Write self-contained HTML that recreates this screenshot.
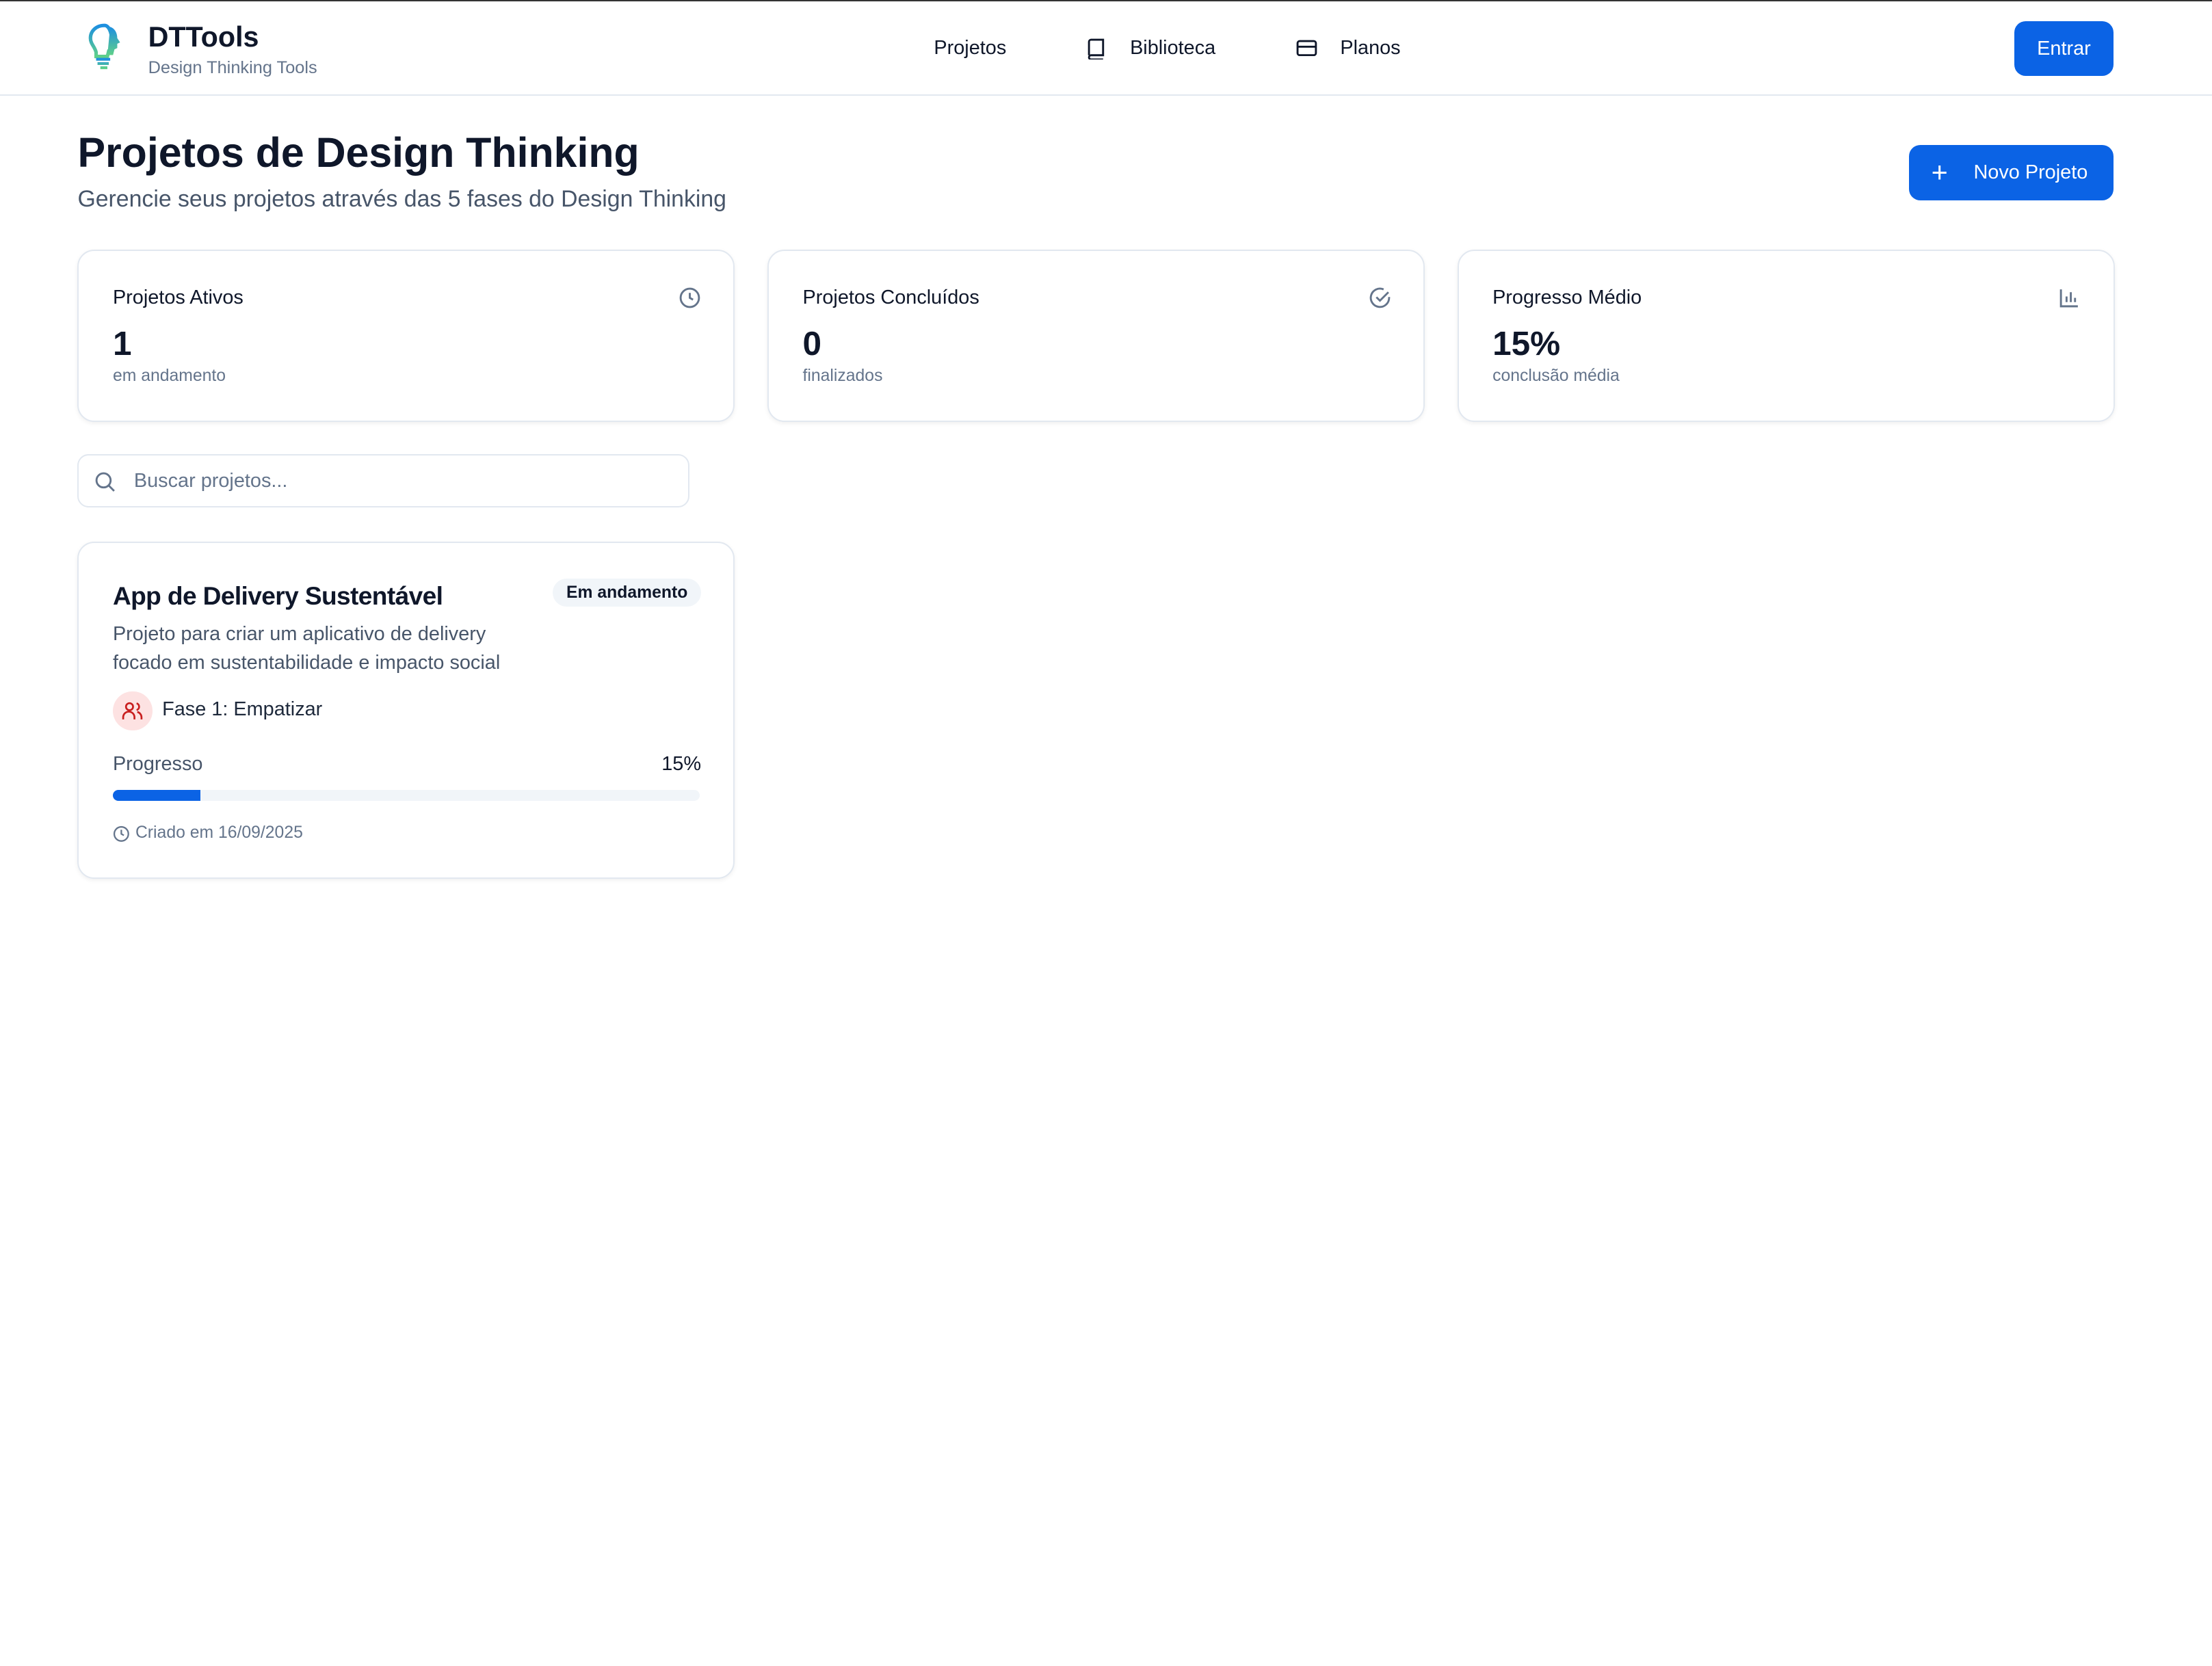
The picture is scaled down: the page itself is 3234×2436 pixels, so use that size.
<!DOCTYPE html>
<html><head><meta charset="utf-8"><style>
html{zoom:2.0625}
body{margin:0;width:1568px;height:1180px;background:#fff;font-family:"Liberation Sans",sans-serif;color:#0f172a;border-top:1px solid #333;overflow:hidden}
.hdr{height:66px;border-bottom:1px solid #e2e8f0;position:relative}
.abs{position:absolute}
.card{position:absolute;border:1px solid #e2e8f0;border-radius:12px;box-shadow:0 1px 3px rgba(0,0,0,.06);background:#fff}
.lbl{font-size:14px;color:#0f172a}
.big{font-size:24px;font-weight:bold}
.sub{font-size:12px;color:#64748b}
svg{display:block}
</style></head><body>
<div class="hdr">
 <svg class="abs" style="left:60px;top:14px" width="28" height="36" viewBox="0 0 28 36"><defs><linearGradient id="g" x1="0" y1="0" x2="0" y2="1"><stop offset="0" stop-color="#1d8fe0"/><stop offset="1" stop-color="#5fd08a"/></linearGradient></defs><path d="M14 3c-6 0-10 4-10 9 0 4 3 6 4 10l0 3h8l1-4 2-1v-3l2-1-2-3c0-5-2-10-5-10z" fill="none" stroke="url(#g)" stroke-width="2.5"/><path d="M18 4c3 1 5 4 5 8l2 3-2 1v3l-2 1-1 4h-4" fill="url(#g)"/><path d="M8 27h10M9 30h8M11 33h5" stroke="url(#g)" stroke-width="2"/></svg>
 <div class="abs" style="left:105px;top:14px;font-size:20px;font-weight:bold">DTTools</div>
 <div class="abs" style="left:105px;top:40px;font-size:12.3px;color:#64748b">Design Thinking Tools</div>
 <div class="abs" style="left:662px;top:25px;font-size:14px">Projetos</div>
 <svg class="abs" style="left:770px;top:26px" width="14" height="15" viewBox="0 0 14 15" fill="none" stroke="#0f172a" stroke-width="1.4"><path d="M2 12V2.5A1.5 1.5 0 0 1 3.5 1H12v11H3.5A1.5 1.5 0 0 0 2 13.5 1.5 1.5 0 0 0 3.5 15H12"/></svg>
 <div class="abs" style="left:801px;top:25px;font-size:14px">Biblioteca</div>
 <svg class="abs" style="left:919px;top:27px" width="15" height="12" viewBox="0 0 15 12" fill="none" stroke="#0f172a" stroke-width="1.4"><rect x="1" y="1" width="13" height="10" rx="1.5"/><path d="M1 5h13"/></svg>
 <div class="abs" style="left:950px;top:25px;font-size:14px">Planos</div>
 <div class="abs" style="left:1428px;top:14px;width:70px;height:39px;background:#0b63e5;border-radius:8px;color:#fff;font-size:14px;text-align:center;line-height:39px">Entrar</div>
</div>
<div class="abs" style="left:55px;top:91px;font-size:29.5px;font-weight:bold">Projetos de Design Thinking</div>
<div class="abs" style="left:55px;top:132px;font-size:16.4px;color:#475569">Gerencie seus projetos através das 5 fases do Design Thinking</div>
<div class="abs" style="left:1353px;top:103px;width:145px;height:39px;background:#0b63e5;border-radius:8px;color:#fff;font-size:14px;line-height:39px"><span style="position:absolute;left:16px;font-size:20px">+</span><span style="position:absolute;left:46px">Novo Projeto</span></div>

<div class="card" style="left:55px;top:177px;width:464px;height:120px">
 <div class="abs lbl" style="left:24px;top:25px">Projetos Ativos</div>
 <svg class="abs" style="left:425px;top:25px" width="16" height="16" viewBox="0 0 16 16" fill="none" stroke="#64748b" stroke-width="1.4"><circle cx="8" cy="8" r="6.5"/><path d="M8 4.5V8l2.3 1.3"/></svg>
 <div class="abs big" style="left:24px;top:52px">1</div>
 <div class="abs sub" style="left:24px;top:82px">em andamento</div>
</div>
<div class="card" style="left:544px;top:177px;width:464px;height:120px">
 <div class="abs lbl" style="left:24px;top:25px">Projetos Concluídos</div>
 <svg class="abs" style="left:425px;top:25px" width="16" height="16" viewBox="0 0 16 16" fill="none" stroke="#64748b" stroke-width="1.4"><path d="M14.5 7.4V8A6.5 6.5 0 1 1 10.6 2"/><path d="M5.5 7.5 8 10l6-6"/></svg>
 <div class="abs big" style="left:24px;top:52px">0</div>
 <div class="abs sub" style="left:24px;top:82px">finalizados</div>
</div>
<div class="card" style="left:1033px;top:177px;width:464px;height:120px">
 <div class="abs lbl" style="left:24px;top:25px">Progresso Médio</div>
 <svg class="abs" style="left:425px;top:25px" width="16" height="16" viewBox="0 0 16 16" fill="none" stroke="#64748b" stroke-width="1.4"><path d="M2 2v12h12M6 11V7M9 11V4M12 11V8"/></svg>
 <div class="abs big" style="left:24px;top:52px">15%</div>
 <div class="abs sub" style="left:24px;top:82px">conclusão média</div>
</div>

<div class="abs" style="left:55px;top:322px;width:432px;height:36px;border:1px solid #e2e8f0;border-radius:8px">
 <svg class="abs" style="left:11px;top:11px" width="15" height="15" viewBox="0 0 15 15" fill="none" stroke="#64748b" stroke-width="1.4"><circle cx="6.5" cy="6.5" r="5"/><path d="M10.2 10.2 14 14"/></svg>
 <div class="abs" style="left:39px;top:10px;font-size:14px;color:#64748b">Buscar projetos...</div>
</div>

<div class="card" style="left:55px;top:384px;width:464px;height:237px">
 <div class="abs" style="left:24px;top:27px;font-size:18px;font-weight:bold;letter-spacing:-0.3px">App de Delivery Sustentável</div>
 <div class="abs" style="left:336px;top:25px;width:105px;height:20px;background:#f1f5f9;border-radius:10px;font-size:12px;font-weight:bold;text-align:center;line-height:20px">Em andamento</div>
 <div class="abs" style="left:24px;top:55px;font-size:14px;color:#475569;line-height:20px">Projeto para criar um aplicativo de delivery<br>focado em sustentabilidade e impacto social</div>
 <div class="abs" style="left:24px;top:105px;width:28px;height:28px;border-radius:14px;background:#fde2e2">
  <svg class="abs" style="left:6px;top:6px" width="16" height="16" viewBox="0 0 16 16" fill="none" stroke="#c81e1e" stroke-width="1.3"><circle cx="6" cy="5" r="2.5"/><path d="M1.5 14v-1.5a4 4 0 0 1 8 0V14M11 2.6a2.5 2.5 0 0 1 0 4.8M14.5 14v-1.5a4 4 0 0 0-3-3.8"/></svg>
 </div>
 <div class="abs" style="left:59px;top:110px;font-size:14px;color:#1e293b">Fase 1: Empatizar</div>
 <div class="abs" style="left:24px;top:149px;font-size:14px;color:#475569">Progresso</div>
 <div class="abs" style="left:413px;top:149px;font-size:14px">15%</div>
 <div class="abs" style="left:24px;top:175px;width:416px;height:8px;border-radius:4px;background:#f1f5f9;overflow:hidden"><div style="width:62px;height:8px;background:#0b63e5"></div></div>
 <svg class="abs" style="left:24px;top:200px" width="12" height="12" viewBox="0 0 12 12" fill="none" stroke="#64748b" stroke-width="1.1"><circle cx="6" cy="6" r="5"/><path d="M6 3v3l1.8 1"/></svg>
 <div class="abs" style="left:40px;top:199px;font-size:12px;color:#64748b">Criado em 16/09/2025</div>
</div>
</body></html>
